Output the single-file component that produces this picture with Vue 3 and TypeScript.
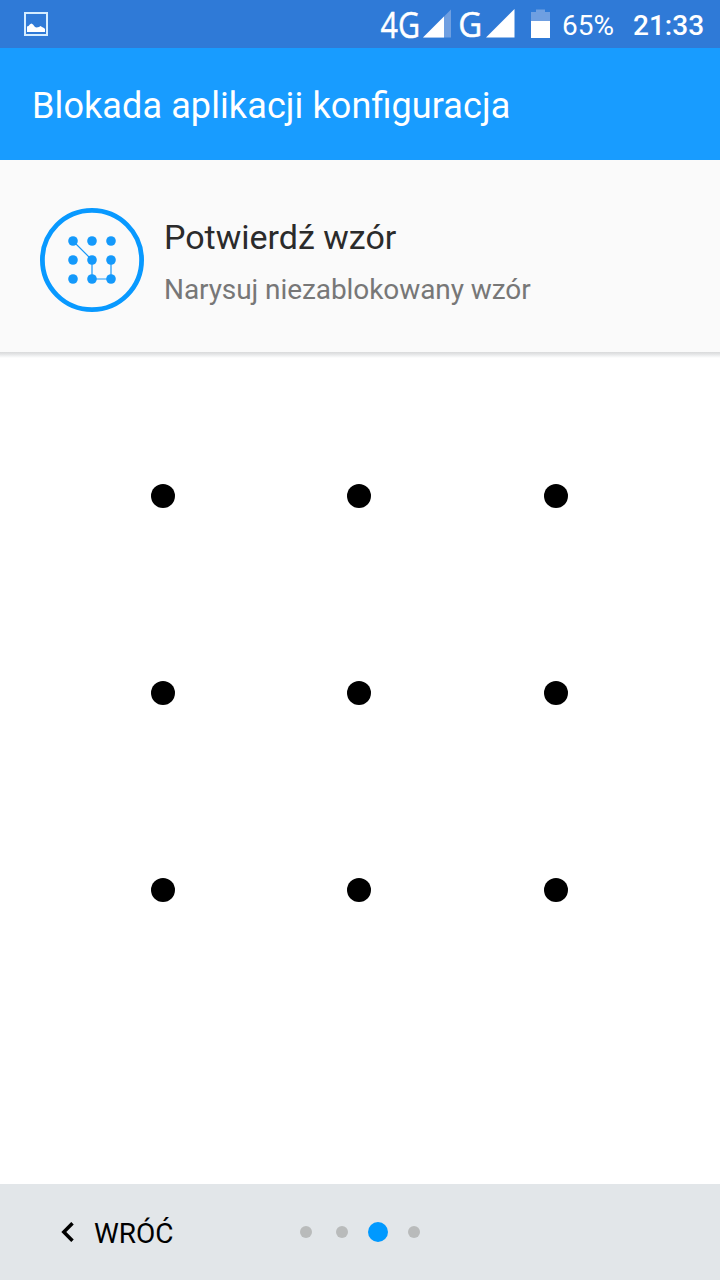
<script setup lang="ts">
const columns: number[] = [7, 26, 45]
const patternNodes = columns.flatMap((y) => columns.map((x) => ({ x, y })))
const steps: number[] = [1, 2, 3, 4]
const currentStep = 3
</script>

<template>
  <main class="screen">
    <header class="status">
      <svg class="picture" width="24" height="24" viewBox="0 0 24 24">
        <rect x="1" y="1" width="22" height="22" fill="none" stroke="#d5edff" stroke-width="2" />
        <path d="M3 20V14.5L4.5 14L6 12.3L7.5 11.5L9 12.5L11 15L12.5 15.5L15 15L16.5 14L18 15L20 16L21 17V20Z" fill="#fff" />
      </svg>
      <svg class="signals" width="175" height="48" viewBox="0 0 175 48">
        <text class="net" x="0.500" y="37.8" textLength="39.500" lengthAdjust="spacingAndGlyphs">4G</text>
        <path d="M71 9.5V37.5H43Z" fill="#6f9fe1" />
        <path d="M64 16.5V37.5H43Z" fill="#fff" />
        <text class="net second" x="78.300" y="36.7" textLength="24" lengthAdjust="spacingAndGlyphs">G</text>
        <path d="M134.500 9V37.500H106Z" fill="#fff" />
        <path d="M151 12H156V9.500H165V12H170V21H151Z" fill="#6f9fe1" />
        <path d="M151 21H170V38H151Z" fill="#fff" />
      </svg>
      <span class="battery">65%</span>
      <span class="clock">21:33</span>
    </header>

    <div class="toolbar"><h1>Blokada aplikacji konfiguracja</h1></div>

    <section class="prompt">
      <svg class="emblem" width="104" height="104" viewBox="0 0 104 104">
        <circle cx="52" cy="52" r="49.600" fill="none" stroke="#0899ff" stroke-width="4.800" />
        <g transform="translate(26 26)">
          <path d="M7 7L26 26V45H45V26" fill="none" stroke="#1a98f7" stroke-width="1.200" />
          <circle v-for="(node, i) in patternNodes" :key="i" :cx="node.x" :cy="node.y" r="4.800" fill="#1399fb" />
        </g>
      </svg>
      <div class="copy">
        <h2>Potwierdź wzór</h2>
        <p>Narysuj niezablokowany wzór</p>
      </div>
    </section>

    <section class="board">
      <div class="grid">
        <span v-for="n in 9" :key="n" class="dot"></span>
      </div>
    </section>

    <footer class="footer">
      <button class="back" type="button">
        <svg width="14" height="20" viewBox="0 0 14 20">
          <path d="M12.500 1.200L3.800 10L12.500 18.800" fill="none" stroke="#000" stroke-width="3.500" />
        </svg>
        <span>WRÓĆ</span>
      </button>
      <div class="steps">
        <span v-for="step in steps" :key="step" class="step"><i :class="{ active: step === currentStep }"></i></span>
      </div>
      <div></div>
    </footer>
  </main>
</template>

<style>
body {
  margin: 0;
}
</style>

<style scoped>
.screen {
  width: 720px;
  height: 1280px;
  display: flex;
  flex-direction: column;
  overflow: hidden;
  background: #fff;
  font-family: Roboto, "Noto Sans", sans-serif;
}
.status {
  height: 48px;
  flex: none;
  display: flex;
  align-items: center;
  background: #2f7ad7;
  color: #fff;
  font-size: 28px;
  line-height: 48px;
  white-space: nowrap;
}
.picture {
  margin-left: 24px;
}
.signals {
  margin-left: 332px;
  flex: none;
}
.net {
  font-family: "Open Sans", "Noto Sans", sans-serif;
  font-size: 36px;
  fill: #fff;
  stroke: #fff;
  stroke-width: 0.5px;
}
.second {
  font-size: 34.500px;
}
.battery {
  width: 71px;
  margin-left: 7px;
  padding-top: 3px;
}
.clock {
  font-weight: 500;
  padding-top: 3px;
}
.toolbar {
  height: 112px;
  flex: none;
  display: flex;
  align-items: center;
  box-sizing: border-box;
  padding: 3px 32px 0;
  background: #189cff;
  color: #fff;
}
h1,
h2,
p {
  margin: 0;
  font-weight: 400;
  white-space: nowrap;
}
h1 {
  font-size: 36px;
  line-height: 44px;
  letter-spacing: 0.1px;
  font-feature-settings: "liga" 1;
}
.prompt {
  height: 192px;
  flex: none;
  display: flex;
  align-items: flex-start;
  box-sizing: border-box;
  padding: 48px 40px 0;
  background: #fafafa;
}
.copy {
  margin-left: 20px;
  padding-top: 8px;
}
h2 {
  font-size: 34px;
  line-height: 42px;
  color: #2b2b2b;
}
p {
  margin-top: 15px;
  font-size: 28px;
  line-height: 34px;
  letter-spacing: -0.08px;
  color: #777;
}
.board {
  flex: 1;
  background: linear-gradient(#d9dadb, #e3e4e5 2px, #f1f2f3 4px, #fff 6px);
}
.grid {
  margin: 132px 0 0 151px;
  display: grid;
  grid-template-columns: 196px 197px 24px;
  row-gap: 173px;
}
.dot {
  width: 24px;
  height: 24px;
  border-radius: 50%;
  background: #000;
}
.footer {
  height: 96px;
  flex: none;
  display: grid;
  grid-template-columns: 288px 144px 288px;
  align-items: center;
  background: #e2e6e9;
}
.back {
  display: flex;
  align-items: center;
  gap: 20px;
  padding: 0 0 0 60px;
  border: 0;
  background: none;
  font: 400 28px/34px Roboto, sans-serif;
  color: #000;
}
.back span {
  padding-top: 3px;
}
.steps {
  display: flex;
}
.step {
  width: 36px;
  height: 20px;
  display: flex;
  align-items: center;
  justify-content: center;
}
.step i {
  width: 12px;
  height: 12px;
  border-radius: 50%;
  background: #b9bbbb;
}
.step i.active {
  width: 20px;
  height: 20px;
  background: #0099ff;
}
</style>
